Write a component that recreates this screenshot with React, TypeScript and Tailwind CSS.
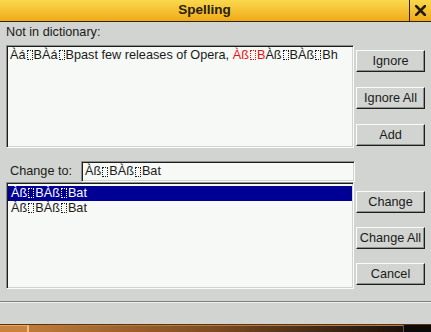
import React, { FC } from 'react'

const font = { fontFamily: '"Liberation Sans", Arial, sans-serif' }

// the dotted box drawn where a glyph is missing
const Box: FC = () => (
  <span className="inline-block w-[6px] h-[10px] mx-[1px] border border-dotted border-current align-[-1px]" />
)

const Garbled: FC<{ a: string; b?: string }> = ({ a, b = 'B' }) => (
  <>
    {a}
    <Box />
    {b}
  </>
)

const Btn: FC<{ label: string }> = ({ label }) => (
  <button className="w-[69px] h-[22px] bg-[#d1d4d0] border border-t-[#fbfbfb] border-l-[#fbfbfb] border-b-[#1e1e1e] border-r-[#1e1e1e] shadow-[inset_-1px_-1px_0_#8e908d] text-[12.7px] text-[#1a1a1a] leading-none">
    {label}
  </button>
)

const sunken =
  'border border-t-[#8e908d] border-l-[#8e908d] border-b-[#fbfbfb] border-r-[#fbfbfb] shadow-[inset_1px_1px_0_#1e1e1e,inset_-1px_-1px_0_#d1d4d0] bg-[#f6f9f6]'

export default function App() {
  return (
    <div className="w-[431px] h-[332px] flex flex-col bg-[#d1d4d0] overflow-hidden" style={font}>
      {/* title bar */}
      <div className="h-[22px] flex border-b border-[#2a2410] bg-gradient-to-b from-[#f9d94c] to-[#f0aa10]">
        <div className="flex-1 flex items-center justify-center font-bold text-[13.5px] text-[#262010] border-r border-[#2a2410]">
          Spelling
        </div>
        <div className="w-[21px] flex items-center justify-center">
          <svg width="11" height="11" viewBox="0 0 11 11">
            <path d="M1 1 L10 10 M10 1 L1 10" stroke="#221c0c" strokeWidth="2.6" strokeLinecap="square" />
          </svg>
        </div>
      </div>

      {/* body */}
      <div className="flex-1 flex flex-col px-[6px] text-[12.7px] text-[#1a1a1a]">
        <div className="h-[23px] flex items-end pb-[3px]">Not in dictionary:</div>

        <div className="flex gap-[2px]">
          <div className={`w-[349px] h-[103px] ${sunken} px-[3px] pt-[2px] leading-[14px] whitespace-nowrap overflow-hidden`}>
            <Garbled a="Àá" />
            <Garbled a="Àá" />
            past few releases of Opera,{' '}
            <span className="text-[#f01010]">
              <Garbled a="Àß" />
            </span>
            <Garbled a="Àß" />
            <Garbled a="Àß" b="Bh" />
          </div>
          <div className="flex flex-col gap-[15px] pt-[5px]">
            <Btn label="Ignore" />
            <Btn label="Ignore All" />
            <Btn label="Add" />
          </div>
        </div>

        <div className="flex items-center mt-[13px] h-[21px]">
          <div className="w-[75px] pl-[4px]">Change to:</div>
          <div className={`w-[274px] h-[21px] ${sunken} px-[3px] flex items-center whitespace-nowrap`}>
            <Garbled a="Àß" />
            <Garbled a="Àß" b="Bat" />
          </div>
        </div>

        <div className="flex gap-[2px]">
          <div className={`w-[349px] h-[107px] ${sunken} px-[1px] pt-[3px] leading-[15px] whitespace-nowrap`}>
            <div className="bg-[#000094] text-white px-[3px] h-[15px]">
              <Garbled a="Àß" />
              <Garbled a="Àß" b="Bat" />
            </div>
            <div className="px-[3px] h-[15px]">
              <Garbled a="Àß" />
              <Garbled a="Àß" b="Bat" />
            </div>
          </div>
          <div className="flex flex-col gap-[14px] pt-[9px]">
            <Btn label="Change" />
            <Btn label="Change All" />
            <Btn label="Cancel" />
          </div>
        </div>

        <div className="mt-auto mb-[21px] -mx-[6px] h-[2px] border-t border-[#7e807d] bg-[#eef0ee]" />
      </div>

      {/* taskbar strip */}
      <div className="h-[8px] flex border-t border-[#5a3510]">
        <div className="w-[29px] bg-[#c8843e] border-t border-[#eba560] border-r-2 border-r-[#f2be7c]" />
        <div className="flex-1 bg-gradient-to-r from-[#c07a36] via-[#7a4c22] to-[#1a120c] border-t border-[#b87a40]" />
        <div className="w-[28px] bg-[#0c0a08] border-l border-[#5a5652]" />
      </div>
    </div>
  )
}
